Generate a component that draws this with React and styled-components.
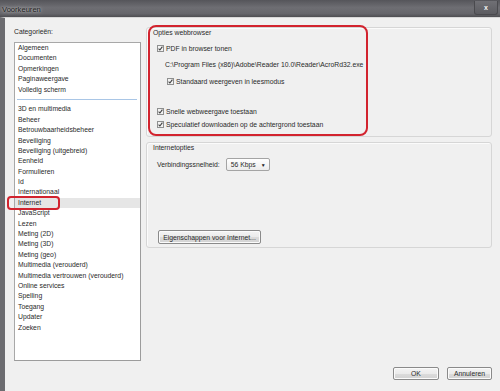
import React from 'react';
import styled, { createGlobalStyle } from 'styled-components';

const GlobalStyle = createGlobalStyle`
  html, body {
    margin: 0;
    padding: 0;
    background: #f0f0f0;
  }
  * {
    box-sizing: border-box;
  }
`;

const categoriesTop = ['Algemeen', 'Documenten', 'Opmerkingen', 'Paginaweergave', 'Volledig scherm'];

const categoriesBottom = [
  '3D en multimedia',
  'Beheer',
  'Betrouwbaarheidsbeheer',
  'Beveiliging',
  'Beveiliging (uitgebreid)',
  'Eenheid',
  'Formulieren',
  'Id',
  'Internationaal',
  'Internet',
  'JavaScript',
  'Lezen',
  'Meting (2D)',
  'Meting (3D)',
  'Meting (geo)',
  'Multimedia (verouderd)',
  'Multimedia vertrouwen (verouderd)',
  'Online services',
  'Spelling',
  'Toegang',
  'Updater',
  'Zoeken',
];

const Window = styled.div`
  width: 500px;
  height: 391px;
  display: flex;
  flex-direction: column;
  font-family: 'Liberation Sans', Arial, sans-serif;
  font-size: 6.8px;
  color: #2a2a2a;
  overflow: hidden;
`;

const TitleBar = styled.div`
  height: 17px;
  flex: none;
  display: flex;
  align-items: center;
  justify-content: space-between;
  padding-left: 2px;
  background: linear-gradient(180deg, #55555a 0%, #6e6e73 45%, #66666b 80%, #4e4e52 100%);
`;

const Title = styled.span`
  font-size: 7.6px;
  margin-top: 2px;
  color: #1c1c1c;
  text-shadow: 0 0 4px #b8b8b8, 0 0 2px #c8c8c8;
`;

const CloseButton = styled.div`
  width: 24px;
  height: 14px;
  margin-right: 2px;
  margin-top: -2px;
  display: flex;
  align-items: center;
  justify-content: center;
  border: 1px solid #4a4a4e;
  border-top: none;
  border-radius: 0 0 3px 3px;
  background: linear-gradient(180deg, #707075, #5c5c61);
  color: #f4f4f4;
  font-size: 7px;
  font-weight: 700;
`;

const Frame = styled.div`
  flex: 1;
  display: flex;
  flex-direction: column;
  border-left: 5px solid #6c6c70;
  border-top: 1px solid #d8d8d8;
  padding: 9px 8px 10px 9px;
  background: #f0f0f0;
`;

const Columns = styled.div`
  display: flex;
  gap: 5px;
`;

const LeftColumn = styled.div`
  width: 127px;
  display: flex;
  flex-direction: column;
`;

const Label = styled.div`
  height: 10px;
  line-height: 10px;
  margin-bottom: 5px;
`;

const ListBox = styled.div`
  position: relative;
  height: 319px;
  background: #fff;
  border: 1px solid #a8a8a8;
  border-right-color: #9c9c9c;
  border-bottom-color: #9c9c9c;
`;

const ListItem = styled.div`
  position: relative;
  height: 10.4px;
  line-height: 10.4px;
  padding-left: 3px;
  white-space: nowrap;
  background: ${(p) => (p.$selected ? '#e6e6e6' : 'transparent')};
`;

const Highlight = styled.span`
  position: absolute;
  left: -8px;
  top: -2px;
  width: 53px;
  height: 14px;
  border: 2px solid #d2232e;
  border-radius: 4px;
`;

const Separator = styled.div`
  height: 9.4px;
  display: flex;
  align-items: center;
  padding: 0 3px 0 2px;

  &::after {
    content: '';
    flex: 1;
    height: 1px;
    background: #a9c6e6;
  }
`;

const RightColumn = styled.div`
  flex: 1;
  display: flex;
  flex-direction: column;
  gap: 5px;
`;

const GroupBox = styled.div`
  position: relative;
  height: ${(p) => p.$height}px;
  border: 1px solid #d6d6d6;
  border-radius: 3px;
  box-shadow: inset 1px 1px 0 #fbfbfb;
  padding-left: 6px;
`;

const Annotation = styled.span`
  position: absolute;
  left: 1px;
  top: -3px;
  width: 220px;
  height: 111px;
  border: 2.5px solid #d2232e;
  border-radius: 8px;
  pointer-events: none;
`;

const Legend = styled.div`
  height: 10px;
  line-height: 10px;
`;

const Row = styled.div`
  display: flex;
  align-items: center;
  gap: 2px;
  height: 10px;
  margin-top: ${(p) => p.$top}px;
  padding-left: ${(p) => p.$indent}px;
  white-space: nowrap;
`;

const CheckSvg = styled.svg`
  flex: none;
  width: 7px;
  height: 7px;
`;

const FieldRow = styled.div`
  display: flex;
  align-items: center;
  gap: 6px;
  margin-top: 5px;
  padding-left: 4px;
`;

const Select = styled.div`
  width: 44px;
  height: 13px;
  display: flex;
  align-items: center;
  justify-content: space-between;
  padding: 0 3px 0 4px;
  border: 1px solid #a4a4a4;
  border-radius: 2px;
  background: linear-gradient(180deg, #ffffff, #ececec);
`;

const Arrow = styled.span`
  font-size: 5px;
  color: #222;
`;

const ButtonRow = styled.div`
  display: flex;
  margin-top: 59px;
  padding-left: 5px;
`;

const Button = styled.div`
  width: ${(p) => p.$width}px;
  height: ${(p) => p.$height || 13}px;
  display: flex;
  align-items: center;
  justify-content: center;
  border: 1px solid #8a8a8a;
  border-radius: 2px;
  background: linear-gradient(180deg, #f4f4f4 0%, #ebebeb 50%, #dcdcdc 51%, #d2d2d2 100%);
  box-shadow: inset 0 0 0 1px #fbfbfb;
  white-space: nowrap;
`;

const Footer = styled.div`
  display: flex;
  justify-content: flex-end;
  gap: 8px;
  margin-top: 6px;
`;

function Check() {
  return (
    <CheckSvg viewBox="0 0 7 7">
      <rect x="0.5" y="0.5" width="6" height="6" fill="#f2f2f2" stroke="#8e8f8f" />
      <path d="M1.6 3.6 L2.9 5 L5.4 1.7" fill="none" stroke="#3c3c3c" strokeWidth="1.1" />
    </CheckSvg>
  );
}

export default function App() {
  return (
    <Window>
      <GlobalStyle />
      <TitleBar>
        <Title>Voorkeuren</Title>
        <CloseButton>x</CloseButton>
      </TitleBar>
      <Frame>
        <Columns>
          <LeftColumn>
            <Label>Categorieën:</Label>
            <ListBox>
              {categoriesTop.map((c) => (
                <ListItem key={c}>{c}</ListItem>
              ))}
              <Separator />
              {categoriesBottom.map((c) => (
                <ListItem key={c} $selected={c === 'Internet'}>
                  {c === 'Internet' && <Highlight />}
                  {c}
                </ListItem>
              ))}
            </ListBox>
          </LeftColumn>
          <RightColumn>
            <GroupBox $height={110}>
              <Annotation />
              <Legend>Opties webbrowser</Legend>
              <Row $top={5} $indent={4}>
                <Check />
                PDF in browser tonen
              </Row>
              <Row $top={6} $indent={12}>
                C:\Program Files (x86)\Adobe\Reader 10.0\Reader\AcroRd32.exe
              </Row>
              <Row $top={7} $indent={14}>
                <Check />
                Standaard weergeven in leesmodus
              </Row>
              <Row $top={20} $indent={4}>
                <Check />
                Snelle webweergave toestaan
              </Row>
              <Row $top={3} $indent={4}>
                <Check />
                Speculatief downloaden op de achtergrond toestaan
              </Row>
            </GroupBox>
            <GroupBox $height={106}>
              <Legend>Internetopties</Legend>
              <FieldRow>
                <span>Verbindingssnelheid:</span>
                <Select>
                  <span>56 Kbps</span>
                  <Arrow>▼</Arrow>
                </Select>
              </FieldRow>
              <ButtonRow>
                <Button $width={103} $height={14}>Eigenschappen voor Internet...</Button>
              </ButtonRow>
            </GroupBox>
          </RightColumn>
        </Columns>
        <Footer>
          <Button $width={46}>OK</Button>
          <Button $width={45}>Annuleren</Button>
        </Footer>
      </Frame>
    </Window>
  );
}
